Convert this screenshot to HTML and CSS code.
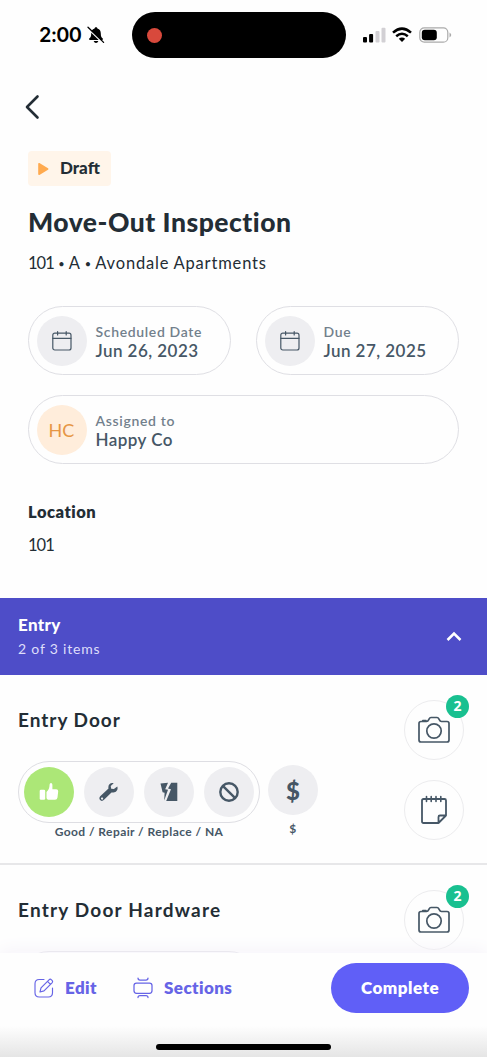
FILE: index.html
```html
<!DOCTYPE html>
<html lang="en">
<head>
<meta charset="utf-8">
<meta name="viewport" content="width=device-width, initial-scale=1">
<title>Move-Out Inspection</title>
<link rel="stylesheet" href="styles.css">
</head>
<body>
<svg class="symbols" aria-hidden="true">
  <symbol id="calendar" viewBox="0 0 20 20"><g fill="none" stroke="currentColor" stroke-width="1.2" stroke-linecap="round"><rect x=".8" y="2.2" width="18.2" height="16.8" rx="2"/><path d="M.8 7.3H19M5.6 .6V4M14.2 .6V4"/></g></symbol>
  <symbol id="camera" viewBox="0 0 32 28"><g fill="none" stroke="currentColor" stroke-width="1.7" stroke-linejoin="round" stroke-linecap="round"><path d="M3 5.500H8.500C10 5.500 10.300 4.700 11 3.200Q11.800 1.500 13 1.500H19Q20.200 1.500 21 3.200C21.700 4.700 22 5.500 23.500 5.500H29Q31 5.500 31 7.500V24Q31 26 29 26H3Q1 26 1 24V7.500Q1 5.500 3 5.500Z"/><circle cx="16" cy="15" r="7.200"/><path d="M4.800 4.500H8"/></g></symbol>
</svg>
<div class="screen">
  <header class="status">
    <div class="clock"><span>2:00</span>
      <svg width="18" height="18" viewBox="0 0 18 18"><path d="M9 1.200C8 1.200 7.600 1.800 7.600 2.500C5.200 3.200 4.200 5 4.200 7.500C4.200 10.500 3.600 11.300 2.200 12.600Q1.600 13.900 2.900 13.900H15.100Q16.400 13.900 15.800 12.600C14.400 11.300 13.800 10.500 13.800 7.500C13.800 5 12.800 3.200 10.400 2.500C10.400 1.800 10 1.200 9 1.200ZM6.600 15H11.400Q10.600 17 9 17T6.600 15Z"/><path d="M.6 2.200L15.600 16.800" stroke="#fff" stroke-width="1.500"/><path d="M1 1.200L16.600 16.400" stroke="#000" stroke-width="1.300" stroke-linecap="round"/></svg>
    </div>
    <div class="island"><i class="rec"></i></div>
    <div class="signals">
      <svg width="24" height="16" viewBox="0 0 24 16"><rect x="1" y="10" width="4" height="5.500" rx="1"/><rect x="7.100" y="7" width="4" height="8.500" rx="1"/><g fill="#d2d0d4"><rect x="13.500" y="4" width="4" height="11.500" rx="1"/><rect x="19.500" y=".8" width="4" height="14.700" rx="1"/></g></svg>
      <svg width="20" height="16" viewBox="0 0 20 16"><g fill="none" stroke="#000" stroke-width="2.500"><path d="M1 5.600Q10-2.400 19 5.600M4.200 9.200Q10 4.200 15.800 9.200"/></g><path d="M6.800 11.700Q10 9.200 13.200 11.700L10 15Z"/></svg>
      <svg width="33" height="16" viewBox="0 0 33 16"><rect x=".8" y=".8" width="28" height="14.400" rx="4.500" fill="none" stroke="#aaa" stroke-width="1.200"/><rect x="2.800" y="2.800" width="15" height="10.400" rx="3"/><path d="M30.500 5.500Q34 8 30.500 10.500Z" fill="#aaa"/></svg>
    </div>
  </header>
  <main class="content">
    <section class="summary">
      <button class="back" aria-label="Back"><svg width="18" height="26" viewBox="0 0 18 26"><path d="M13.500 2.500L3 13L13.500 23.500" fill="none" stroke="#232d35" stroke-width="2.600" stroke-linecap="round" stroke-linejoin="round"/></svg></button>
      <div class="tag"><svg width="11" height="14" viewBox="0 0 11 14"><path d="M1 1.800L9.600 7L1 12.200Z" fill="#ffaa4f" stroke="#ffaa4f" stroke-width="1.600" stroke-linejoin="round"/></svg><span class="draft">Draft</span></div>
      <h1 class="title">Move-Out Inspection</h1>
      <p class="place"><span class="number">101</span> <span class="dot">•</span> A <span class="dot">•</span> Avondale Apartments</p>
      <div class="facts">
        <div class="fact"><span class="disc"><svg width="20" height="20"><use href="#calendar"/></svg></span><div><p class="fact-label">Scheduled Date</p><p class="fact-value">Jun 26, 2023</p></div></div>
        <div class="fact"><span class="disc"><svg width="20" height="20"><use href="#calendar"/></svg></span><div><p class="fact-label">Due</p><p class="fact-value">Jun 27, 2025</p></div></div>
        <div class="fact wide"><span class="disc avatar">HC</span><div><p class="fact-label">Assigned to</p><p class="fact-value">Happy Co</p></div></div>
      </div>
      <h2 class="location">Location</h2>
      <p class="unit number">101</p>
    </section>
    <section class="group">
      <div><h2 class="group-name">Entry</h2><p class="group-count">2 of 3 items</p></div>
      <svg width="16" height="11" viewBox="0 0 16 11"><path d="M1.500 9L8 2.500L14.500 9" fill="none" stroke="#fff" stroke-width="2.500"/></svg>
    </section>
    <article class="item">
      <div class="item-main">
        <h3 class="door">Entry Door</h3>
        <div class="ratings">
          <div class="rating">
            <div class="choices">
              <span class="disc good"><svg width="20" height="20" viewBox="0 0 20 20" fill="#fff"><rect x=".7" y="7.800" width="5.500" height="10" rx="1.300"/><path d="M7.500 10Q10.500 7.500 10.600 2.500Q10.700 1 12 1T13.400 2.800V7.200H17.200Q19.200 7.200 19.200 9.200L18.500 15.500Q18.100 17.800 16 17.800H10.500Q7.500 17.800 7.500 15.500Z"/></svg></span>
              <span class="disc"><svg width="20" height="20" viewBox="0 0 20 20"><path d="M18.300 4.500L14.900 7.100L12.200 6.700L11.700 4L14.700 1.200C11.300 .2 8.700 2.800 9.500 6.600L1.200 14.300C-.3 16 .4 18.300 2.200 18.800C3.300 19.100 4.200 18.600 5 17.800L12.500 10.500C16.300 11 19.600 8.700 18.300 4.500ZM2.800 15.500A1.100 1.100 0 1 1 2.700 17.600A1.100 1.100 0 0 1 2.800 15.500Z" fill="currentColor" fill-rule="evenodd"/></svg></span>
              <span class="disc"><svg width="18" height="20" viewBox="0 0 18 20" fill="currentColor"><path d="M.5 1.500L8 .8L5.200 7.200L8 7.800L4.200 18.500L4.600 10.800L2.600 10.200Z"/><path d="M11.200 .8H17.300V19H6.200L11 7.200L8 6.600Z"/></svg></span>
              <span class="disc"><svg width="22" height="22" viewBox="0 0 22 22"><g fill="none" stroke="currentColor" stroke-width="2.400"><circle cx="11" cy="11" r="8.700"/><path d="M4.800 4.800L17.200 17.200"/></g></svg></span>
            </div>
            <p class="caption">Good / Repair / Replace / NA</p>
          </div>
          <div class="cost"><span class="disc dollar">$</span><p class="caption cost-caption">$</p></div>
        </div>
      </div>
      <div class="actions">
        <button class="action" aria-label="Photos"><svg width="32" height="28"><use href="#camera"/></svg><b class="badge">2</b></button>
        <button class="action" aria-label="Notes"><svg width="28" height="30" viewBox="0 0 28 30"><g fill="none" stroke="currentColor" stroke-width="1.800" stroke-linejoin="round" stroke-linecap="round"><path d="M18.500 28H3.500Q2 28 2 26.500V5.500Q2 4 3.500 4H24.500Q26 4 26 5.500V20.500ZM18.500 28V22Q18.500 20.500 20 20.500H26"/><path d="M6.500 1.500V6.500M11.200 1.500V6.500M16 1.500V6.500M20.800 1.500V6.500" stroke-width="1.600"/></g></svg></button>
      </div>
    </article>
    <article class="item">
      <div class="item-main">
        <h3 class="hardware">Entry Door Hardware</h3>
        <div class="rating"><div class="choices"></div></div>
      </div>
      <div class="actions"><button class="action" aria-label="Photos"><svg width="32" height="28"><use href="#camera"/></svg><b class="badge">2</b></button></div>
    </article>
  </main>
  <footer class="toolbar">
    <div class="toolbar-row">
      <button class="tool"><svg width="20" height="20" viewBox="0 0 20 20"><g fill="none" stroke="currentColor" stroke-width="1.150" stroke-linejoin="round" stroke-linecap="round"><path d="M10 1.500H5.200Q1 1.500 1 5.700V14.800Q1 19 5.200 19H14.300Q18.500 19 18.500 14.800V10"/><path d="M6 14L7 9.800L15 1.800Q16.200 .6 17.500 1.800L18 2.300Q19.200 3.500 18 4.800L10 12.900ZM13.500 3.300L16.500 6.300"/></g></svg><span>Edit</span></button>
      <button class="tool sections-tool"><svg width="20" height="22" viewBox="0 0 20 22"><g fill="none" stroke="currentColor" stroke-width="1.250" stroke-linecap="round"><rect x="1" y="6" width="18" height="10.300" rx="2.500"/><path d="M5 1Q5 3 7 3H13Q15 3 15 1M5 20.500Q5 18.500 7 18.500H13Q15 18.500 15 20.500"/></g></svg><span>Sections</span></button>
      <button class="complete">Complete</button>
    </div>
    <div class="home"></div>
  </footer>
</div>
</body>
</html>
```
FILE: styles.css
```css
* { box-sizing: border-box; }
body { margin: 0; background: #fefefe; font-family: Lato, "Open Sans", sans-serif; color: #232d35; }
h1, h2, h3, p { margin: 0; white-space: nowrap; }
button { border: 0; background: none; padding: 0; font: inherit; color: inherit; }
svg { display: block; flex: none; }
.symbols { display: none; }
.screen { height: 1057px; display: flex; flex-direction: column; overflow: hidden; background: #fefefe; }

.status { height: 74px; flex: none; display: flex; padding: 12px 35px 0 39px; }
.clock { width: 93px; height: 46px; display: flex; align-items: center; gap: 6px; color: #000; font: 600 20px/24px Inter, sans-serif; letter-spacing: -0.8px; }
.island { width: 214px; height: 46px; border-radius: 23px; background: #000; display: flex; align-items: center; padding-left: 15px; }
.rec { width: 15px; height: 15px; border-radius: 50%; background: #d8493c; }
.signals { height: 46px; display: flex; align-items: center; gap: 6px; margin-left: 16px; }
.signals svg:last-child { margin-left: 1px; }

.content { height: 879px; flex: none; overflow: hidden; }
.summary { height: 524px; padding: 0 28px; display: flex; flex-direction: column; align-items: flex-start; }
.back { margin: 20px 0 0 -4px; height: 26px; }
.tag { margin-top: 31px; width: 83px; height: 35px; border-radius: 4px; background: #fff5ea; display: flex; align-items: center; padding-left: 10px; gap: 11px; }
.draft { font-size: 17px; font-weight: 900; line-height: 22px; letter-spacing: 0; padding-bottom: 1px; }
.title { margin-top: 20px; font-size: 26.500px; line-height: 32px; font-weight: 900; letter-spacing: 0.5px; }
.place { margin-top: 14px; font-size: 16.500px; line-height: 22px; letter-spacing: 0.85px; word-spacing: -0.5px; }
.number { letter-spacing: -1px; }
.dot { font-size: 11px; vertical-align: 1px; letter-spacing: 0; }
.facts { margin-top: 31px; margin-left: -0.5px; width: 431px; display: grid; grid-template-columns: 203px 203px; gap: 20px 25px; }
.fact { height: 69px; border: 1.500px solid #dfdfe4; border-radius: 35px; display: flex; align-items: center; gap: 9px; padding: 2px 0 0 8px; }
.fact .disc { margin-top: -2px; }
.wide { grid-column: 1 / 3; }
.disc { width: 50px; height: 50px; flex: none; border-radius: 50%; background: #eeeef1; color: #465766; display: flex; align-items: center; justify-content: center; }
.avatar { background: #ffeddb; color: #e69645; font-size: 18px; letter-spacing: 0; }
.fact-label { font-size: 14px; line-height: 19px; color: #72808c; font-weight: 600; letter-spacing: 0.65px; }
.fact-value { font-size: 17px; line-height: 20px; color: #465766; font-weight: 600; letter-spacing: 0.45px; }
.location { margin-top: 37px; font-size: 16.500px; line-height: 22px; font-weight: 800; letter-spacing: 0.5px; }
.unit { margin-top: 11px; font-size: 16.500px; line-height: 22px; }

.group { height: 77px; background: #4e4dc8; color: #fff; display: flex; align-items: center; justify-content: space-between; padding: 0 25px 0 18px; }
.group-name { font-size: 17px; line-height: 24px; font-weight: 900; letter-spacing: 0.3px; }
.group-count { font-size: 14px; line-height: 24px; letter-spacing: 0.8px; color: #dedefa; }

.item { height: 190px; display: flex; justify-content: space-between; padding: 25px 24px 0 18px; border-bottom: 2px solid #e7e7e9; }
.item-main { display: flex; flex-direction: column; gap: 28px; padding-top: 7px; }
.item h3 { font-size: 19px; line-height: 26px; font-weight: 700; }
.item .door { letter-spacing: 1px; }
.item .hardware { letter-spacing: 1.200px; }
.ratings { display: flex; gap: 8px; }
.rating { width: 242px; }
.choices { height: 62px; border: 1.500px solid #dedee3; border-radius: 32px; display: flex; align-items: center; gap: 10px; padding-left: 5px; }
.good { background: #ace777; }
.caption { font-size: 12px; line-height: 18px; color: #465766; text-align: center; font-weight: 700; letter-spacing: 0.43px; }
.cost { padding-top: 4px; }
.cost-caption { margin-top: 5px; }
.dollar { font-size: 24px; font-weight: 900; }
.actions { display: flex; flex-direction: column; gap: 20px; margin-right: -1px; }
.action { position: relative; width: 60px; height: 60px; border: 1px solid #ececee; border-radius: 50%; color: #465766; display: flex; align-items: center; justify-content: center; }
.badge { position: absolute; right: -6px; top: -6px; width: 23px; height: 23px; border-radius: 50%; background: #19c090; color: #fff; font: 700 14px/22px "Open Sans", sans-serif; text-align: center; }

.toolbar { height: 104px; flex: none; background: linear-gradient(#fefefe 70%, #e5e5e5); box-shadow: 0 -2px 18px #f5f2f9; position: relative; }
.toolbar-row { height: 81px; padding: 10px 18px 0 34px; display: flex; align-items: flex-start; }
.tool { height: 50px; display: flex; align-items: center; gap: 11px; color: #6664e6; font-size: 17px; font-weight: 800; letter-spacing: 0.4px; width: 99px; }
.tool span { padding-bottom: 2px; }
.sections-tool { width: 190px; }
.complete { width: 138px; height: 50px; margin-left: auto; padding-bottom: 2px; background: #605ff7; border-radius: 25px; color: #fff; font-size: 17px; font-weight: 800; letter-spacing: 0.5px; }
.home { margin: 10px auto 0; width: 175px; height: 6px; border-radius: 3px; background: #000; }
```
